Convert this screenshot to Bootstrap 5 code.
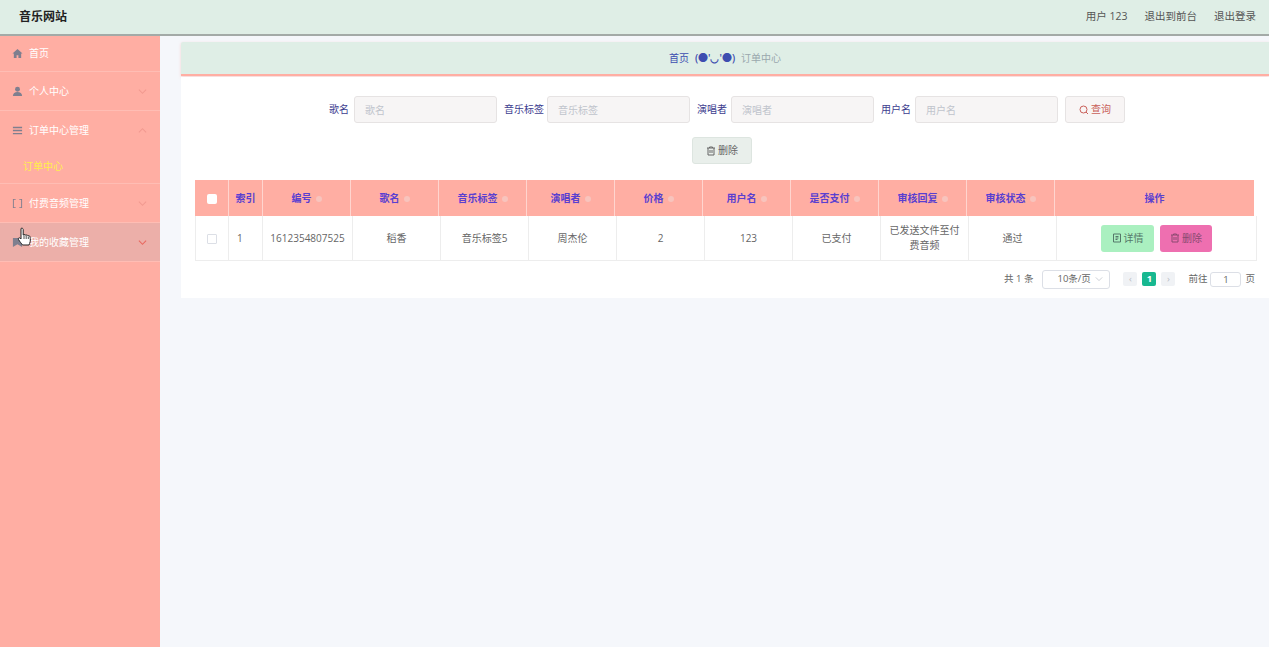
<!DOCTYPE html>
<html lang="zh-CN">
<head>
  <meta charset="UTF-8">
  <title>音乐网站</title>
  <link href="https://cdn.jsdelivr.net/npm/bootstrap@5.3.0/dist/css/bootstrap.min.css" rel="stylesheet">
  <style>
    html, body { height: 100%; }
    body { background: #f5f7fb; font-family: "Open Sans", "Noto Sans CJK SC", sans-serif; font-size: 10px; color: #666; overflow: hidden; }
    .top-bar { height: 36px; background: #dfeee6; border-bottom: 2px solid #a3aaa7; padding: 0 13px 0 19px; }
    .brand { font-size: 12px; font-weight: 700; color: #222; }
    .top-links { color: #555; font-size: 10.5px; gap: 17px; }
    .page-wrap { height: 611px; }
    .side-menu { width: 160px; background: #ffaea3; flex-shrink: 0; color: #fff; position: relative; }
    .side-item { height: 39px; border-bottom: 1px solid #ffbdb4; padding: 0 12px; gap: 6px; }
    .side-item.first { height: 36px; }
    .side-item.hovered { background: #ecafa9; }
    .side-sub { height: 34px; padding-left: 23px; color: #fff04a; border-bottom: 1px solid #ffbdb4; }
    .side-ico { width: 11px; height: 11px; fill: #7f7f8f; flex-shrink: 0; }
    .side-arrow { width: 9px; height: 9px; margin-left: auto; margin-right: 1px; fill: none; stroke: #f29a90; stroke-width: 1.2; }
    .hovered .side-arrow { stroke: #e8685f; }
    .hand { position: absolute; left: 17px; top: 191px; width: 17px; height: 22px; }
    .main-area { padding: 6px 0 0 21px; min-width: 0; }
    .crumb { height: 34px; background: #dfeee6; border-bottom: 2px solid #ffaea3; box-shadow: 0 1px 3px rgba(255, 174, 163, .5); gap: 6px; border-radius: 2px 0 0 0; }
    .crumb .home { color: #3d4db0; }
    .crumb .face { color: #3d4db0; font-weight: 600; }
    .crumb .cur { color: #9aa8ad; }
    .panel-box { background: #fff; margin-top: 1px; height: 221px; padding: 19px 12px 0 14px; }
    .filter-row { height: 27px; padding-left: 125px; }
    .filter-row label { color: #3d3d8f; width: 29px; margin-right: 5px; white-space: nowrap; text-align: right; }
    .filter-row label.wide { width: 38px; }
    .filter-input { width: 143px; height: 27px; background: #f7f5f5; border: 1px solid #e6e3e3; border-radius: 3px; font-size: 10px; padding: 0 10px; margin-right: 7px; }
    .filter-input::placeholder { color: #c0c4cc; }
    .btn-query { width: 60px; height: 27px; background: #f8f5f5; border: 1px solid #e6e3e3; border-radius: 3px; color: #c9605a; font-size: 10px; padding: 0; }
    .btn-bulk { width: 60px; height: 27px; background: #e9efeb; border: 1px solid #dde5e0; border-radius: 3px; color: #666; font-size: 10px; padding: 0; }
    .bulk-row { margin: 14px 0 16px; padding-left: 497px; }
    .mini-ico { width: 10px; height: 10px; fill: none; stroke: currentColor; stroke-width: 1; margin-right: 2px; vertical-align: -1.5px; }
    .grid-table { table-layout: fixed; border-collapse: separate; border-spacing: 0; margin: 0; font-size: 10px; }
    .head-table { width: 1059px; }
    .body-table { width: 1062px; }
    .grid-table th { height: 36px; background: #ffaea3; color: #5a3fd0; font-weight: 600; text-align: center; padding: 0; border-right: 1px solid #ffd5cf; vertical-align: middle; white-space: nowrap; }
    .grid-table th:last-child { border-right: 0; }
    .grid-table td { height: 45px; text-align: center; vertical-align: middle; padding: 0 8px; color: #666; border-right: 1px solid #ededed; border-bottom: 1px solid #ededed; line-height: 15px; }
    .grid-table td:first-child { border-left: 1px solid #ededed; }
    .sort-dot { display: inline-block; width: 6px; height: 6px; margin-left: 4px; border-radius: 50%; background: #f8c4bd; }
    .head-box { display: inline-block; width: 10px; height: 10px; background: #fff; border-radius: 2px; vertical-align: middle; }
    .row-box { display: inline-block; width: 10px; height: 10px; background: #fff; border: 1px solid #dcdfe6; border-radius: 1px; vertical-align: middle; }
    .w-check { width: 34px; } .w-index { width: 34px; } .w-cell { width: 88px; } .w-id { width: 88px; }
    .body-table .w-index { width: 34px; } .body-table .w-id { width: 90px; }
    .td-index { text-align: left !important; padding-left: 8px !important; }
    .btn-detail { width: 53px; height: 27px; background: #aaf0c0; color: #55786a; border: 0; border-radius: 3px; font-size: 10px; padding: 0; }
    .btn-remove { width: 52px; height: 27px; background: #ee6fb0; color: #8a4a70; border: 0; border-radius: 3px; font-size: 10px; padding: 0; margin-left: 6px; }
    .pager-row { height: 36px; padding-right: 2px; color: #666; font-size: 9.5px; }
    .page-size { width: 68px; height: 19px; border: 1px solid #dcdfe6; border-radius: 3px; margin: 0 13px 0 9px; padding: 0 6px 0 14px; }
    .page-size svg { width: 8px; height: 8px; margin-left: auto; fill: none; stroke: #c0c4cc; stroke-width: 1; }
    .page-btn { width: 14px; height: 14px; background: #f0f2f5; color: #b8bcc4; margin-right: 5px; border-radius: 2px; }
    .page-btn.on { background: #17b890; color: #fff; font-weight: 700; }
    .page-go { width: 31px; height: 15px; border: 1px solid #dcdfe6; border-radius: 3px; margin: 0 4px 0 3px; text-align: center; line-height: 13px; }
  </style>
</head>
<body>

  <div class="top-bar d-flex align-items-center justify-content-between">
    <div class="brand">音乐网站</div>
    <div class="top-links d-flex">
      <span>用户 123</span>
      <span>退出到前台</span>
      <span>退出登录</span>
    </div>
  </div>

  <div class="page-wrap d-flex">
    <div class="side-menu">
      <div class="side-item first d-flex align-items-center">
        <svg class="side-ico" viewBox="0 0 12 12"><path d="M6 1 .5 6H2v5h3V8h2v3h3V6h1.500z"/></svg>首页
      </div>
      <div class="side-item d-flex align-items-center">
        <svg class="side-ico" viewBox="0 0 12 12"><circle cx="6" cy="3.500" r="2.700"/><path d="M1 11c0-3 2-4.500 5-4.500s5 1.500 5 4.500z"/></svg>个人中心
        <svg class="side-arrow" viewBox="0 0 10 10"><path d="M1 3l4 4 4-4"/></svg>
      </div>
      <div class="side-item d-flex align-items-center border-0">
        <svg class="side-ico" viewBox="0 0 12 12"><path d="M1 2h10v1.500H1zM1 5.300h10v1.500H1zM1 8.600h10v1.500H1z"/></svg>订单中心管理
        <svg class="side-arrow" viewBox="0 0 10 10"><path d="M1 7l4-4 4 4"/></svg>
      </div>
      <div class="side-sub d-flex align-items-center">订单中心</div>
      <div class="side-item d-flex align-items-center">
        <svg class="side-ico" viewBox="0 0 12 12"><path d="M4 1H1v10h3v-1H2V2h2zM8 1h3v10H8v-1h2V2H8z"/></svg>付费音频管理
        <svg class="side-arrow" viewBox="0 0 10 10"><path d="M1 3l4 4 4-4"/></svg>
      </div>
      <div class="side-item hovered d-flex align-items-center">
        <svg class="side-ico" viewBox="0 0 12 12"><path d="M1 1h10v10L6 8l-5 3z"/></svg>我的收藏管理
        <svg class="side-arrow" viewBox="0 0 10 10"><path d="M1 3l4 4 4-4"/></svg>
      </div>
      <svg class="hand" viewBox="0 0 17 22"><path d="M4 1.500c1-.8 2.200 0 2.200 1V8l.8-.3c.8-.3 1.600 0 1.800.5.8-.4 1.800-.2 2.100.5.800-.3 1.800 0 2 .8.300 1 .6 3 .3 5-.2 1.500-.8 2.500-1.200 3.500H5.500C4.500 16.500 3 15 1.500 12.500c-.6-1 .2-2 1.200-1.600.4.200.8.600 1.300 1.100z" fill="#fff" stroke="#222" stroke-width="1"/><path d="M7 8.500V12M9.200 8.500V12M11.300 9.500V12" stroke="#222" stroke-width=".8" fill="none"/></svg>
    </div>

    <div class="main-area flex-grow-1">
      <div class="crumb d-flex align-items-center justify-content-center">
        <span class="home">首页</span><span class="face">(●'◡'●)</span><span class="cur">订单中心</span>
      </div>

      <div class="panel-box">
        <div class="filter-row d-flex align-items-center">
          <label>歌名</label><input class="filter-input" placeholder="歌名">
          <label class="wide">音乐标签</label><input class="filter-input" placeholder="音乐标签">
          <label>演唱者</label><input class="filter-input" placeholder="演唱者">
          <label>用户名</label><input class="filter-input" placeholder="用户名">
          <button class="btn btn-query" type="button"><svg class="mini-ico" viewBox="0 0 10 10"><circle cx="4.500" cy="4.500" r="3.500"/><path d="M7 7l2 2"/></svg>查询</button>
        </div>
        <div class="bulk-row">
          <button class="btn btn-bulk" type="button"><svg class="mini-ico" viewBox="0 0 10 10"><path d="M1 2h8M3.500 2V1h3v1M2 2v7h6V2M4 4v3M6 4v3"/></svg>删除</button>
        </div>

        <table class="grid-table head-table">
          <colgroup><col class="w-check"><col class="w-index"><col class="w-id"><col class="w-cell"><col class="w-cell"><col class="w-cell"><col class="w-cell"><col class="w-cell"><col class="w-cell"><col class="w-cell"><col class="w-cell"><col></colgroup>
          <thead>
            <tr>
              <th><span class="head-box"></span></th>
              <th>索引</th>
              <th>编号<i class="sort-dot"></i></th>
              <th>歌名<i class="sort-dot"></i></th>
              <th>音乐标签<i class="sort-dot"></i></th>
              <th>演唱者<i class="sort-dot"></i></th>
              <th>价格<i class="sort-dot"></i></th>
              <th>用户名<i class="sort-dot"></i></th>
              <th>是否支付<i class="sort-dot"></i></th>
              <th>审核回复<i class="sort-dot"></i></th>
              <th>审核状态<i class="sort-dot"></i></th>
              <th>操作</th>
            </tr>
          </thead>
        </table>
        <table class="grid-table body-table">
          <colgroup><col class="w-check"><col class="w-index"><col class="w-id"><col class="w-cell"><col class="w-cell"><col class="w-cell"><col class="w-cell"><col class="w-cell"><col class="w-cell"><col class="w-cell"><col class="w-cell"><col></colgroup>
          <tbody>
            <tr>
              <td><span class="row-box"></span></td>
              <td class="td-index">1</td>
              <td class="px-0">1612354807525</td>
              <td>稻香</td>
              <td>音乐标签5</td>
              <td>周杰伦</td>
              <td>2</td>
              <td>123</td>
              <td>已支付</td>
              <td>已发送文件至付费音频</td>
              <td>通过</td>
              <td class="px-0">
                <button class="btn btn-detail" type="button"><svg class="mini-ico" viewBox="0 0 10 10"><path d="M1.500 1h7v8h-7zM3.500 3.500h3M3.500 5h3M3.500 6.500h2"/></svg>详情</button><button class="btn btn-remove" type="button"><svg class="mini-ico" viewBox="0 0 10 10"><path d="M1 2h8M3.500 2V1h3v1M2 2v7h6V2M4 4v3M6 4v3"/></svg>删除</button>
              </td>
            </tr>
          </tbody>
        </table>

        <div class="pager-row d-flex align-items-center justify-content-end">
          <span>共 1 条</span>
          <div class="page-size d-flex align-items-center">10条/页<svg viewBox="0 0 10 10"><path d="M1 3l4 4 4-4"/></svg></div>
          <span class="page-btn d-flex align-items-center justify-content-center">‹</span>
          <span class="page-btn on d-flex align-items-center justify-content-center">1</span>
          <span class="page-btn d-flex align-items-center justify-content-center">›</span>
          <span class="ms-2">前往</span><span class="page-go">1</span><span>页</span>
        </div>
      </div>
    </div>
  </div>

<script src="https://cdn.jsdelivr.net/npm/bootstrap@5.3.0/dist/js/bootstrap.bundle.min.js"></script>
</body>
</html>
